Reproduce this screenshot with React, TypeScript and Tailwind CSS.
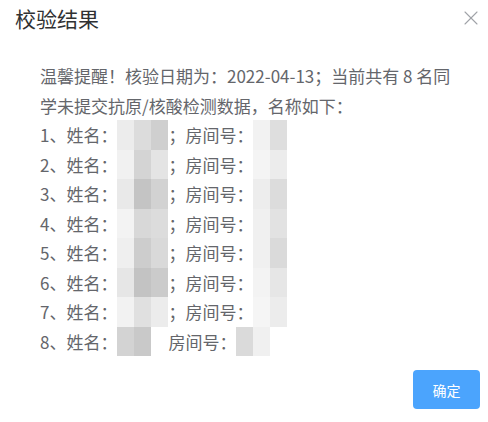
import { X } from "lucide-react";

// mosaic cells standing in for the redacted names / room numbers
const rows: { name: string[]; room: string[]; w?: number }[] = [
  { name: ["#ececec", "#dcdcdc", "#cfcfcf"], room: ["#f2f2f2", "#dedede"] },
  { name: ["#f1f1f1", "#d4d4d4", "#e4e4e4"], room: ["#f4f4f4", "#ececec"] },
  { name: ["#e9e9e9", "#c4c4c4", "#d2d2d2"], room: ["#ededed", "#dcdcdc"] },
  { name: ["#f3f3f3", "#d8d8d8", "#dcdcdc"], room: ["#f0f0f0", "#e2e2e2"] },
  { name: ["#efefef", "#cdcdcd", "#d9d9d9"], room: ["#f0f0f0", "#dadada"] },
  { name: ["#e6e6e6", "#c3c3c3", "#cbcbcb"], room: ["#f3f3f3", "#e6e6e6"] },
  { name: ["#f2f2f2", "#e0e0e0", "#ececec"], room: ["#f5f5f5", "#ececec"] },
  { name: ["#d3d3d3", "#c9c9c9"], room: ["#dadada", "#f0f0f0"], w: 2 },
];

function Cells({ colors }: { colors: string[] }) {
  return (
    <span className="inline-flex align-top h-[29.5px]">
      {colors.map((c, i) => (
        <span key={i} className="w-[17px] h-full" style={{ background: c }} />
      ))}
    </span>
  );
}

export default function App() {
  return (
    <div className="w-[488px] h-[422px] bg-white font-['Noto_Sans_CJK_SC','Noto_Sans',sans-serif]">
      <div className="h-[36px] flex items-center justify-between pl-[15px] pr-[5px]">
        <span className="text-[21px] leading-none text-[#303133]">校验结果</span>
        <X className="w-[24px] h-[24px] text-[#a0a3a8]" strokeWidth={1.1} />
      </div>

      <div className="pt-[25px] pl-[40px] text-[17px] leading-[29.5px] text-[#64666b] whitespace-nowrap">
        <div>温馨提醒！核验日期为：2022-04-13；当前共有 8 名同</div>
        <div>学未提交抗原/核酸检测数据，名称如下：</div>
        {rows.map((r, i) => (
          <div key={i}>
            {i + 1}、姓名：<Cells colors={r.name} />
            {r.w ? <span className="inline-block w-[17px]" /> : "；"}房间号：<Cells colors={r.room} />
          </div>
        ))}
      </div>

      <div className="flex justify-end pr-[8px] mt-[14px]">
        <button className="w-[67px] h-[39px] rounded-[4px] bg-[#4ba4fd] text-white text-[14px] leading-none">
          确定
        </button>
      </div>
    </div>
  );
}
